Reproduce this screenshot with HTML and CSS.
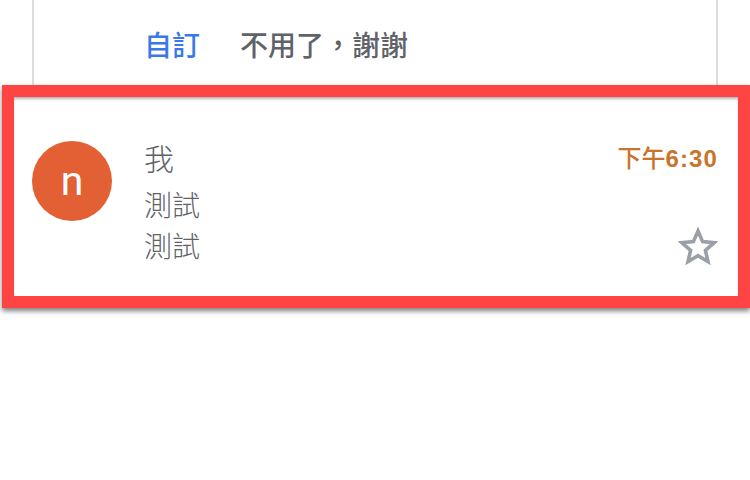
FILE: index.html
```html
<!DOCTYPE html>
<html lang="zh-Hant">
<head>
<meta charset="UTF-8">
<meta name="viewport" content="width=device-width, initial-scale=1.0">
<title>Inbox</title>
<link rel="stylesheet" href="styles.css">
</head>
<body>

<section class="prompt">
    <div class="prompt-card">
        <a class="prompt-btn primary" href="#">自訂</a>
        <a class="prompt-btn" href="#">不用了，謝謝</a>
    </div>
</section>

<article class="mail">
    <div class="avatar">n</div>
    <div class="mail-body">
        <div class="sender">我</div>
        <div class="line">測試</div>
        <div class="line">測試</div>
    </div>
    <div class="mail-side">
        <div class="time">下午<span class="digits">6:30</span></div>
        <svg class="star" viewBox="0 0 40 40" aria-hidden="true">
            <path d="M20 5 24.6 15.6 36.2 16.7 27.4 24.3 30 35.6 20 29.7 10 35.6 12.6 24.3 3.8 16.7 15.4 15.6Z"/>
        </svg>
    </div>
</article>

</body>
</html>
```

FILE: styles.css
```css
* {
    box-sizing: border-box;
    margin: 0;
    padding: 0;
}

body {
    font-family: "Liberation Sans", "Noto Sans CJK TC", sans-serif;
    background-color: #fff;
    width: 750px;
    height: 480px;
    overflow: hidden;
}

.prompt {
    height: 85px;
    padding: 0 32px;
}

.prompt-card {
    height: 85px;
    border-left: 2px solid #dadce0;
    border-right: 2px solid #dadce0;
    padding: 28px 0 0 110px;
    display: flex;
    gap: 40px;
}

.prompt-btn {
    font-size: 28px;
    font-weight: 500;
    line-height: 38px;
    color: #5f6368;
    text-decoration: none;
}

.prompt-btn.primary {
    color: #3b78e7;
}

.mail {
    margin-left: 2px;
    height: 223px;
    border: 12px solid #ff4444;
    box-shadow: 0 3px 5px rgba(0, 0, 0, 0.5), inset 0 3px 3px -1px rgba(0, 0, 0, 0.3);
    padding: 44px 20px 0 18px;
    display: flex;
}

.avatar {
    width: 80px;
    height: 80px;
    border-radius: 50%;
    background-color: #e26033;
    color: #fff;
    font-family: Roboto, sans-serif;
    font-size: 41px;
    line-height: 80px;
    text-align: center;
    flex-shrink: 0;
}

.mail-body {
    flex: 1;
    margin-left: 32px;
    color: #5f6368;
    font-weight: 300;
}

.sender {
    font-size: 30px;
    line-height: 38px;
    margin-bottom: 7px;
}

.line {
    font-size: 28px;
    line-height: 41px;
}

.mail-side {
    display: flex;
    flex-direction: column;
    align-items: flex-end;
}

.time {
    font-size: 24px;
    line-height: 36px;
    font-weight: 500;
    color: #c8742c;
}

.digits {
    font-weight: 700;
    letter-spacing: 1.1px;
}

.star {
    width: 40px;
    height: 40px;
    margin-top: 49px;
    fill: none;
    stroke: #9aa0a6;
    stroke-width: 3.6;
}
```
